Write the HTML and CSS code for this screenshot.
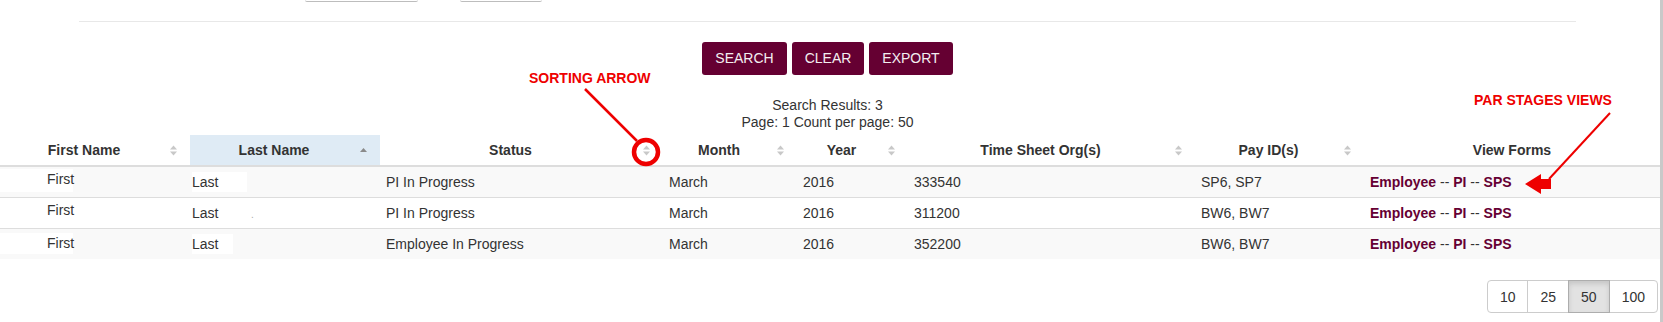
FILE: index.html
```html
<!DOCTYPE html>
<html>
<head>
    <title>PAR Search Results</title>
    <link rel="stylesheet" href="styles.css">
</head>
<body>

<div class="page">
    <div class="main">

        <div class="filterStub">
            <span class="stub stubWide"></span>
            <span class="stub stubNarrow"></span>
        </div>

        <div class="container">
            <div class="divider"></div>

            <div class="actions">
                <a class="btnMaroon" href="javascript:void(0)">SEARCH</a>
                <a class="btnMaroon" href="javascript:void(0)">CLEAR</a>
                <a class="btnMaroon" href="javascript:void(0)">EXPORT</a>
            </div>

            <div class="summary">
                Search Results: 3<br>
                Page: 1 Count per page: 50
            </div>
        </div>

        <table class="results">
            <colgroup>
                <col style="width: 190px">
                <col style="width: 190px">
                <col style="width: 283px">
                <col style="width: 134px">
                <col style="width: 111px">
                <col style="width: 287px">
                <col style="width: 169px">
                <col>
            </colgroup>
            <thead>
            <tr>
                <th class="sortable">First Name
                    <svg class="sortIcon" width="7" height="11" viewBox="0 0 7 11"><path d="M0 4.5L3.5 0.5L7 4.5Z M0 6.5L3.5 10.5L7 6.5Z"/></svg>
                </th>
                <th class="sortable sortedAsc">Last Name
                    <svg class="sortIcon" width="7" height="11" viewBox="0 0 7 11"><path d="M0 7L3.5 3L7 7Z"/></svg>
                </th>
                <th class="sortable">Status
                    <svg class="sortIcon" width="7" height="11" viewBox="0 0 7 11"><path d="M0 4.5L3.5 0.5L7 4.5Z M0 6.5L3.5 10.5L7 6.5Z"/></svg>
                </th>
                <th class="sortable">Month
                    <svg class="sortIcon" width="7" height="11" viewBox="0 0 7 11"><path d="M0 4.5L3.5 0.5L7 4.5Z M0 6.5L3.5 10.5L7 6.5Z"/></svg>
                </th>
                <th class="sortable">Year
                    <svg class="sortIcon" width="7" height="11" viewBox="0 0 7 11"><path d="M0 4.5L3.5 0.5L7 4.5Z M0 6.5L3.5 10.5L7 6.5Z"/></svg>
                </th>
                <th class="sortable">Time Sheet Org(s)
                    <svg class="sortIcon" width="7" height="11" viewBox="0 0 7 11"><path d="M0 4.5L3.5 0.5L7 4.5Z M0 6.5L3.5 10.5L7 6.5Z"/></svg>
                </th>
                <th class="sortable">Pay ID(s)
                    <svg class="sortIcon" width="7" height="11" viewBox="0 0 7 11"><path d="M0 4.5L3.5 0.5L7 4.5Z M0 6.5L3.5 10.5L7 6.5Z"/></svg>
                </th>
                <th>View Forms</th>
            </tr>
            </thead>
            <tbody>
            <tr>
                <td class="firstCol"><span class="redactFirst">First</span></td>
                <td class="lastCol"><span class="redactLast">Last</span></td>
                <td>PI In Progress</td>
                <td>March</td>
                <td>2016</td>
                <td>333540</td>
                <td>SP6, SP7</td>
                <td class="forms"><a href="#">Employee</a> -- <a href="#">PI</a> -- <a href="#">SPS</a></td>
            </tr>
            <tr>
                <td class="firstCol"><span class="redactFirst">First</span></td>
                <td class="lastCol"><span class="redactLast">Last</span><span class="speck">.</span></td>
                <td>PI In Progress</td>
                <td>March</td>
                <td>2016</td>
                <td>311200</td>
                <td>BW6, BW7</td>
                <td class="forms"><a href="#">Employee</a> -- <a href="#">PI</a> -- <a href="#">SPS</a></td>
            </tr>
            <tr>
                <td class="firstCol"><span class="redactFirst short">First</span></td>
                <td class="lastCol"><span class="redactLast short">Last</span></td>
                <td>Employee In Progress</td>
                <td>March</td>
                <td>2016</td>
                <td>352200</td>
                <td>BW6, BW7</td>
                <td class="forms"><a href="#">Employee</a> -- <a href="#">PI</a> -- <a href="#">SPS</a></td>
            </tr>
            </tbody>
        </table>

        <div class="pager">
            <div class="pageSizes">
                <a class="pageBtn" href="#">10</a>
                <a class="pageBtn" href="#">25</a>
                <a class="pageBtn active" href="#">50</a>
                <a class="pageBtn" href="#">100</a>
            </div>
        </div>

        <!-- screenshot callouts -->
        <span class="callout sortingCallout">SORTING ARROW</span>
        <span class="callout stagesCallout">PAR STAGES VIEWS</span>
        <svg class="calloutLines" width="1660" height="322" viewBox="0 0 1660 322">
            <line x1="585" y1="89" x2="637" y2="141" stroke="#ee0000" stroke-width="2.5"/>
            <circle cx="646" cy="152" r="12" fill="none" stroke="#ee0000" stroke-width="4.5"/>
            <line x1="1610" y1="113" x2="1549" y2="179" stroke="#ee0000" stroke-width="2"/>
            <polygon points="1525,184 1541,174 1541,179 1551,179 1551,189 1541,189 1541,194" fill="#ee0000"/>
        </svg>
    </div>
    <div class="edge"></div>
</div>

</body>
</html>
```

FILE: styles.css
```css
body {
    margin: 0;
    font-family: "Liberation Sans", Arial, sans-serif;
    font-size: 14px;
    color: #333;
    background-color: #fff;
}

.page {
    display: flex;
    width: 1663px;
    min-height: 322px;
}

.main {
    position: relative;
    width: 1660px;
}

.edge {
    width: 3px;
    background-color: #c9c9c9;
}

/* bits of the filter form cut off at the top */
.filterStub {
    display: flex;
    gap: 42px;
    height: 2px;
    padding-left: 305px;
}

.stub {
    height: 1px;
    border-bottom: 1px solid #bdbdbd;
    border-radius: 0 0 3px 3px;
}

.stubWide {
    width: 113px;
}

.stubNarrow {
    width: 82px;
}

.container {
    width: 1497px;
    margin-left: 79px;
}

.divider {
    height: 1px;
    margin-top: 19px;
    background-color: #e8e8e8;
}

.actions {
    display: flex;
    justify-content: center;
    gap: 5px;
    margin-top: 20px;
}

.btnMaroon {
    display: inline-block;
    padding: 6px 13px;
    line-height: 21px;
    border-radius: 3px;
    background-color: #650032;
    color: #f3eef0;
    text-decoration: none;
}

.summary {
    margin-top: 22px;
    line-height: 17px;
    text-align: center;
}

.results {
    width: 1660px;
    margin-top: 4px;
    border-collapse: collapse;
    table-layout: fixed;
}

.results th {
    position: relative;
    padding: 5px 8px;
    line-height: 20px;
    font-weight: bold;
    text-align: center;
    border-bottom: 2px solid #ddd;
    white-space: nowrap;
}

.results th.sortable {
    padding-right: 30px;
}

.results th.sortedAsc {
    background-color: #dfebf5;
}

.sortIcon {
    position: absolute;
    right: 13px;
    top: 10px;
    fill: #c8c8c8;
}

.sortedAsc .sortIcon {
    fill: #8a8a8a;
}

.results td {
    height: 20px;
    padding: 5px 6px;
    line-height: 20px;
    border-top: 1px solid #ddd;
    white-space: nowrap;
}

.results tbody tr:nth-child(odd) {
    background-color: #f9f9f9;
}

.results td.firstCol {
    padding-left: 0;
}

.results td.lastCol {
    padding-left: 2px;
}

.redactFirst {
    display: block;
    width: 26px;
    height: 20px;
    margin-top: -3px;
    padding: 0 0 3px 47px;
    background-color: #fff;
}

.redactFirst.short {
    margin-top: -1px;
    padding-bottom: 1px;
}

.redactLast {
    display: inline-block;
    width: 27px;
    height: 20px;
    padding-right: 28px;
    background-color: #fff;
    vertical-align: top;
}

.redactLast.short {
    padding-right: 14px;
}

.speck {
    margin-left: 4px;
    color: #aaa;
    font-size: 10px;
    line-height: 10px;
}

.forms {
    color: #333;
}

.forms a {
    color: #660033;
    font-weight: bold;
    text-decoration: none;
}

.pager {
    display: flex;
    justify-content: flex-end;
    margin-top: 21px;
    padding-right: 2px;
}

.pageSizes {
    display: flex;
}

.pageBtn {
    padding: 6px 12px 5px;
    line-height: 20px;
    border: 1px solid #ccc;
    color: #333;
    text-decoration: none;
    background-color: #fff;
}

.pageBtn + .pageBtn {
    margin-left: -1px;
}

.pageBtn:first-child {
    border-radius: 4px 0 0 4px;
}

.pageBtn:last-child {
    border-radius: 0 4px 4px 0;
}

.pageBtn.active {
    position: relative;
    background-color: #e2e2e2;
    border-color: #adadad;
    box-shadow: inset 0 3px 5px rgba(0, 0, 0, 0.125);
}

.callout {
    position: absolute;
    font-weight: bold;
    font-size: 14px;
    line-height: 16px;
    color: #ee0000;
}

.sortingCallout {
    left: 529px;
    top: 70px;
}

.stagesCallout {
    left: 1474px;
    top: 92px;
}

.calloutLines {
    position: absolute;
    top: 0;
    left: 0;
    pointer-events: none;
}
```
